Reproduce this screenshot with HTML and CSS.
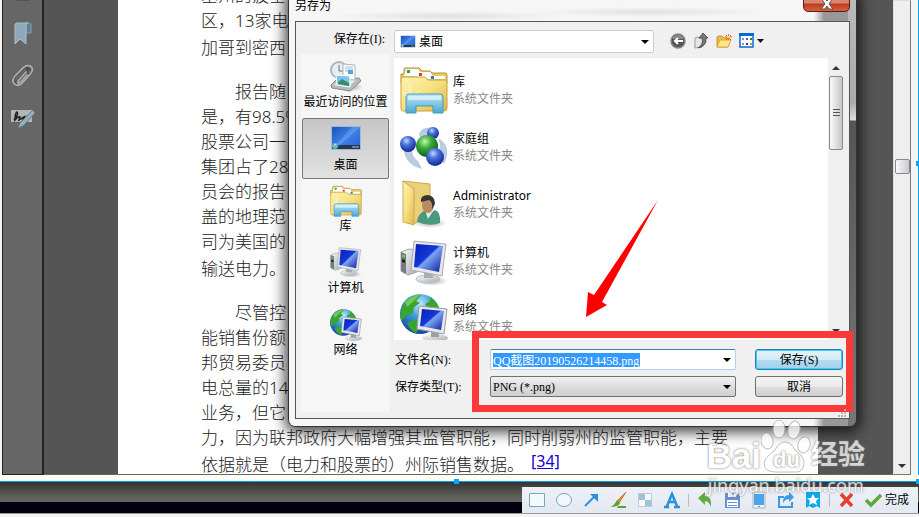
FILE: index.html
```html
<!DOCTYPE html>
<html lang="zh-CN">
<head>
<meta charset="utf-8">
<title>另存为</title>
<link rel="stylesheet" href="styles.css">
</head>
<body>
<svg class="defs" aria-hidden="true">
  <defs>
    <linearGradient id="gFolder" x1="0" y1="0" x2="1" y2="1"><stop offset="0" stop-color="#fff3b0"/><stop offset=".5" stop-color="#f6e080"/><stop offset="1" stop-color="#e0b548"/></linearGradient>
    <linearGradient id="gScreen" x1="0" y1="0" x2="1" y2="1"><stop offset="0" stop-color="#0a1fb8"/><stop offset=".45" stop-color="#1238d8"/><stop offset=".5" stop-color="#7ea4f4"/><stop offset="1" stop-color="#0818a0"/></linearGradient>
    <linearGradient id="gDesk" x1="0" y1="0" x2="1" y2="1"><stop offset="0" stop-color="#1c50b8"/><stop offset=".5" stop-color="#3c82ea"/><stop offset="1" stop-color="#2460cc"/></linearGradient>
    <linearGradient id="gGlass" x1="0" y1="0" x2="0" y2="1"><stop offset="0" stop-color="#bfe6f4"/><stop offset="1" stop-color="#4aa6d8"/></linearGradient>
    <linearGradient id="gMetal" x1="0" y1="0" x2="1" y2="1"><stop offset="0" stop-color="#fafafa"/><stop offset="1" stop-color="#a8acb0"/></linearGradient>
    <radialGradient id="gBlue" cx=".4" cy=".3" r=".7"><stop offset="0" stop-color="#c4d8ff"/><stop offset=".4" stop-color="#4a70dc"/><stop offset="1" stop-color="#122a98"/></radialGradient>
    <radialGradient id="gGreen" cx=".4" cy=".3" r=".7"><stop offset="0" stop-color="#c4f4b0"/><stop offset=".45" stop-color="#38a838"/><stop offset="1" stop-color="#0c6420"/></radialGradient>
    <radialGradient id="gGlobe" cx=".5" cy=".25" r=".8"><stop offset="0" stop-color="#c0ecff"/><stop offset=".4" stop-color="#3c9cdc"/><stop offset="1" stop-color="#103c98"/></radialGradient>
    <radialGradient id="gShadow"><stop offset="0" stop-color="#777" stop-opacity=".6"/><stop offset="1" stop-color="#777" stop-opacity="0"/></radialGradient>
  </defs>
  <symbol id="library" viewBox="0 0 48 48">
    <path d="M4 8V3q0-1 1-1h14l3 3h8l2 2h13q2 0 2 2v8H1V8z" fill="#e8c968" stroke="#b8923c"/>
    <path d="M6 3h12l2 3h10v4H4z" fill="#fff"/><path d="M18 6h12l3 4h12v3H16z" fill="#fff"/>
    <path d="M7 4h3v3H7z" fill="#2e9c34"/><path d="M19 7h3v3h-3z" fill="#dc3a2c"/><path d="M31 10h3v3h-3z" fill="#2878cc"/>
    <path d="M1 13q0-2 2-2h22l3 3h17q2 0 2 2v26q0 3-3 3H3q-2 0-2-3z" fill="url(#gFolder)" stroke="#c8a040"/>
    <path d="M10 15l2 14 11-7-9 10 7 6-10-3-7 8 3-11-6-6 7 2z" fill="#fff" opacity=".4"/>
    <path d="M6 47V31q0-3 3-3h31q3 0 3 3v16H33v-7H16v7z" fill="url(#gGlass)" stroke="#4899bc"/>
    <path d="M8 31q0-1 2-1h29q2 0 2 1v3H8z" fill="#e4f8ff" opacity=".7"/>
  </symbol>
  <symbol id="homegroup" viewBox="0 0 48 48">
    <path d="M19 8Q22 0 34 2L30 9 38 13Q28 8 21 13zM4 25Q6 39 22 43L18 35Q12 31 12 24zM40 13Q52 22 44 38L36 29Q43 20 38 14z" fill="#a9bddc" opacity=".8"/>
    <circle cx="33" cy="7" r="6" fill="url(#gBlue)"/><circle cx="8" cy="18" r="8" fill="url(#gBlue)"/><circle cx="27" cy="20" r="11" fill="url(#gGreen)"/><circle cx="35" cy="31" r="9" fill="url(#gBlue)"/>
  </symbol>
  <symbol id="user" viewBox="0 0 48 48">
    <ellipse cx="30" cy="43" rx="17" ry="5" fill="url(#gShadow)"/>
    <path d="M3 1l27 3v31l-16 9z" fill="#ead078" stroke="#cda954"/><path d="M3 1l11 8v36L3 42z" fill="url(#gFolder)" stroke="#cda954"/>
    <path d="M17 42q1-10 10-12l4 3 4-3q6 2 5 13-10 4-23-1z" fill="#4b9a80"/><path d="M25 30l3 9 5-8z" fill="#e0f0ea"/>
    <ellipse cx="28" cy="25" rx="6" ry="8" fill="#b88a64"/><path d="M21 22q-1-7 7-7 7 1 7 9l-3 5q1-7-3-9z" fill="#383430"/>
  </symbol>
  <symbol id="computer" viewBox="0 0 48 48">
    <ellipse cx="32" cy="41" rx="16" ry="5" fill="url(#gShadow)"/>
    <path d="M1 12l8-3 8 1v22l-9 3-7-4z" fill="url(#gMetal)" stroke="#a4a8ac"/><path d="M1 12l5 2v20l-5-3z" fill="#777c80"/><path d="M2 15h3v2H2z" fill="#54d830"/><path d="M2 19l3 1v3l-3-1z" fill="#222"/>
    <ellipse cx="28" cy="39" rx="12" ry="4" fill="url(#gMetal)" stroke="#b8bcc0"/><path d="M24 30l9 1v7h-9z" fill="#a8adb2"/>
    <path d="M14 1l32 3-4 32-31-6z" fill="#e4e6e9" stroke="#a9adb2"/><path d="M16 4l27 2-4 26-25-5z" fill="url(#gScreen)"/>
  </symbol>
  <symbol id="network" viewBox="0 0 48 48">
    <circle cx="20" cy="20" r="20" fill="url(#gGlobe)"/>
    <path d="M5 8q8-8 16-7l-5 6 4 2-6 4-1 6-7 3-5 5Q-1 17 5 8zM30 3q9 6 10 15l-8-4-4 2-3-6 5-3zM7 29l9-4 5 6-5 8Q9 36 7 29z" fill="#39a52e"/>
    <path d="M5 8q8-7 15-7l-7 7-6 5z" fill="#9be070" opacity=".6"/>
    <ellipse cx="35" cy="44" rx="13" ry="4" fill="url(#gMetal)"/><path d="M31 36h8v7h-8z" fill="#9aa0a6"/>
    <path d="M19 12l28 3-3 25-27-5z" fill="#e6e8eb" stroke="#9a9ea4"/><path d="M22 15l22 2-3 19-21-4z" fill="url(#gScreen)"/>
  </symbol>
  <symbol id="desktop" viewBox="0 0 32 24">
    <path d="M1 0h30v24H1z" fill="#a4b8d4"/><path d="M2 1h28v22H2z" fill="url(#gDesk)"/><path d="M2 19h28v4H2z" fill="#26364c"/><path d="M2 23L22 1h8L10 19z" fill="#fff" opacity=".15"/>
    <circle cx="5" cy="20" r="3" fill="#50b8e0"/><path d="M4 18h2v2H4z" fill="#f4c430"/><path d="M22 20h7v2h-7z" fill="#6c8098"/>
  </symbol>
  <symbol id="recent" viewBox="0 0 32 32">
    <ellipse cx="20" cy="26" rx="13" ry="5" fill="url(#gShadow)"/>
    <circle cx="9" cy="9" r="8" fill="#e4edf2" stroke="#a9b7c0" stroke-width="2"/><path d="M9 4v6h4" fill="none" stroke="#60727e"/>
    <path d="M1 24l6-6 22-1 2 3-11 10-18-3z" fill="#b8babc" stroke="#88898b"/><path d="M4 24l4-4 18-1-8 7z" fill="#eee"/>
    <path d="M13 3l12 1v15l-12-1z" fill="#fff" stroke="#b0b4b8"/><path d="M15 6h8M15 8h8M15 10h5" stroke="#abc"/><path d="M18 9h5v4h-5z" fill="#55a3dc"/>
    <path d="M6 14l14 1v11L7 24z" fill="#7fc4ec" stroke="#fff"/><path d="M8 21l4-3 7 4v3L8 23z" fill="#3b8c6c"/>
  </symbol>
</svg>

<main class="viewer">
  <nav class="rail" aria-label="导航窗格">
    <button class="rail-btn rail-pages" aria-label="页面"><svg width="16" height="22" viewBox="0 0 16 22"><path d="M1 0h14v21H1z" fill="#c4c6c6" stroke="#444"/></svg></button>
    <button class="rail-btn" aria-label="书签"><svg width="18" height="23" viewBox="0 0 18 23"><path d="M11 1h5q1 0 1 2v8h-5z" fill="#5c7f92" stroke="#84a0b0"/><path d="M1 22V3q0-2 2-2h11q-2 1-2 4v17l-6-5z" fill="#8ea9b9" stroke="#a8bfcc"/></svg></button>
    <button class="rail-btn" aria-label="附件"><svg width="22" height="24" viewBox="0 0 24 24"><path d="M7 17L17 6q2-2 0-3-2-2-5 0L3 12q-4 6 0 9 4 3 8-1l9-10q3-4 1-6M5 17q-1 3 2 3l3-2 8-9" fill="none" stroke="#4c4c4c" stroke-width="3"/><path d="M7 17L16 7M12 3L3 12q-4 6 0 9 4 3 8-1l9-10q4-5 1-8-4-3-9 1M7 17q-2 2 0 3l3-2 7-8" fill="none" stroke="#aaa" stroke-width="2"/></svg></button>
    <button class="rail-btn" aria-label="签名"><svg width="24" height="20" viewBox="0 0 24 20"><path d="M0 1h21v12H0z" fill="#b4b6b6"/><path d="M3 11q5-6 3-8-2 1-2 8 3-4 5-3l-1 3 5-3-1 3 4-4" fill="none" stroke="#222" stroke-width="1.5"/><path d="M22 1L9 14l-2 5 5-2L24 4z" fill="#94afc0" stroke="#5e7b8d"/></svg></button>
  </nav>
  <div class="canvas">
    <article class="page">
      <p><span>塞州的波士</span><span>区，13家电</span><span class="last">加哥到密西</span></p>
      <p><span class="first">报告随</span><span>是，有98.5%</span><span>股票公司一</span><span>集团占了28</span><span>员会的报告</span><span>盖的地理范</span><span>司为美国的</span><span class="last">输送电力。</span></p>
      <p><span class="first">尽管控</span><span>能销售份额</span><span>邦贸易委员</span><span>电总量的14</span><span>业务，但它</span><span>力，因为联邦政府大幅增强其监管职能，同时削弱州的监管职能，主要</span><span class="last">依据就是（电力和股票的）州际销售数据。<a href="#ref34">[34]</a></span></p>
    </article>
  </div>
  <div class="doc-scroll"><i class="doc-thumb"></i><i class="arrow-down"></i></div>
</main>
<div class="frame-edge"></div>

<footer class="desktop-strip">
  <div class="shot-tools" role="toolbar" aria-label="截图工具">
    <button aria-label="矩形"><svg viewBox="0 0 18 18"><path d="M1.500 2.500h15v13h-15z" fill="#f2f8fc" stroke="#7ba3bd"/></svg></button>
    <button aria-label="椭圆"><svg viewBox="0 0 18 18"><ellipse cx="9" cy="9" rx="7.500" ry="6.500" fill="#f2f8fc" stroke="#7ba3bd"/></svg></button>
    <button aria-label="箭头"><svg viewBox="0 0 18 18"><path d="M3 15L13 5" stroke="#2b8fdb" stroke-width="2"/><path d="M8 3h8v8z" fill="#2b8fdb"/></svg></button>
    <button aria-label="画刷"><svg viewBox="0 0 18 18"><path d="M17 1L8 10l2 2z" fill="#e28a34" stroke="#d07a2c"/><path d="M8 9l3 3q-1 4-10 4 4-1 7-7z" fill="#5da432"/><path d="M9 15h8v2H8z" fill="#5da432"/></svg></button>
    <button aria-label="马赛克"><svg viewBox="0 0 18 18"><path d="M2 2h14v14H2z" fill="#f6f9fc"/><path d="M2 2h7v7H2zM9 9h7v7H9z" fill="#a3bfd8"/><path d="M2.500 2.500h13v13h-13z" fill="none" stroke="#b7cbdd"/></svg></button>
    <button aria-label="文字"><svg viewBox="0 0 18 18"><path d="M1 16h5M11 16h6M4 15L9 3l5 12M6 11h6" fill="none" stroke="#2b8fdb" stroke-width="2.500"/></svg></button>
    <i class="sep"></i>
    <button aria-label="撤销"><svg viewBox="0 0 18 18"><path d="M2 7l7-6v4q7 0 6 11-2-6-6-6v4z" fill="#63aa3c"/></svg></button>
    <button aria-label="保存"><svg viewBox="0 0 18 18"><path d="M2 2h13l2 3v12H2z" fill="#6b8ed8"/><path d="M5 2h8v4H5zM4 9h11v7H4z" fill="#fff"/><path d="M9 2h2v3H9zM5 11h9v1H5zM5 14h9v1H5z" fill="#6b8ed8"/></svg></button>
    <button aria-label="发送到手机"><svg viewBox="0 0 18 18"><path d="M3 1h12v16H3z" fill="#eef3f7" stroke="#a9b4be"/><path d="M4 3h10v11H4z" fill="#49a4ea"/><path d="M8 15h2v1H8z" fill="#7d8994"/></svg></button>
    <button aria-label="分享"><svg viewBox="0 0 18 18"><path d="M7 6H2v10h13v-5" fill="none" stroke="#3e9ae0" stroke-width="2"/><path d="M6 12q0-8 6-8V1l5 5-5 5V8q-4 0-6 4z" fill="#3e9ae0"/></svg></button>
    <button aria-label="收藏"><svg viewBox="0 0 18 18"><path d="M2 1h14v16l-3-2-4 2-4-2-3 2z" fill="#08a9ee"/><path d="M9 3l2 4h4l-3 3 1 4-4-2-4 2 1-4-3-3h4z" fill="#fff"/></svg></button>
    <i class="sep"></i>
    <button aria-label="退出"><svg viewBox="0 0 18 18"><path d="M4 3l11 12M15 3L4 15" stroke="#e5402e" stroke-width="3.500"/></svg></button>
    <button class="done"><svg viewBox="0 0 18 18"><path d="M2 9l5 5L17 4" fill="none" stroke="#5da83a" stroke-width="3.500"/></svg>完成</button>
  </div>
</footer>
<div class="base"></div>

<section class="dialog" role="dialog" aria-labelledby="dlg-title">
  <header class="titlebar"><span id="dlg-title">另存为</span><button class="close" aria-label="关闭"><svg width="14" height="12" viewBox="0 0 14 12"><path d="M1 0h4l2 3 2-3h4L9 6l4 5H9L7 8l-2 3H1l4-5z" fill="#fff" stroke="#555"/></svg></button></header>
  <div class="client">
    <div class="lookin">
      <label for="lookin">保存在(I):</label>
      <div class="combo look-combo"><svg width="16" height="13"><use href="#desktop"/></svg><select id="lookin"><option>桌面</option></select></div>
      <div class="nav-tools">
        <button aria-label="后退"><svg width="16" height="16" viewBox="0 0 16 16"><circle cx="8" cy="8" r="7" fill="#555" stroke="#888" stroke-width="1.500"/><path d="M3 4q5-4 10 0v2H3z" fill="#aaa" opacity=".6"/><path d="M13 8H5M8 5L5 8l3 3" fill="none" stroke="#fff" stroke-width="2"/></svg></button>
        <button aria-label="向上一级"><svg width="16" height="16" viewBox="0 0 16 16"><path d="M2 5l3-1 1 1h5l-2 9-7 1z" fill="#e6e6e6" stroke="#999"/><path d="M5 15Q11 11 9 5H6l4-5 5 5h-2q1 8-8 10z" fill="#777" stroke="#444" stroke-width=".8"/></svg></button>
        <button aria-label="新建文件夹"><svg width="16" height="16" viewBox="0 0 16 16"><path d="M1 14V4l1-1h4l2 2h4v9z" fill="#e9bd4a" stroke="#c7952e"/><path d="M1 14L4 7h11l-3 7z" fill="#ffe58e" stroke="#d9a93c"/><path d="M12.500 1v6M9 4h7M10 2l5 5M15 2l-5 5" stroke="#f2562a"/><circle cx="12.500" cy="4" r="1.500" fill="#ffdc54"/></svg></button>
        <button class="views" aria-label="视图"><svg width="25" height="16" viewBox="0 0 25 16"><path d="M1 1h13v13H1z" fill="#fff" stroke="#0b6ad8" stroke-width="1.500"/><path d="M0 0h15v3H0z" fill="#0b6ad8"/><path d="M3 5h2v2H3z" fill="#8a8ad0"/><path d="M7 5h2v2H7z" fill="#5a50c8"/><path d="M11 5h2v2h-2z" fill="#1b9040"/><path d="M3 10h2v2H3z" fill="#f07850"/><path d="M7 10h2v2H7z" fill="#1838b0"/><path d="M11 10h2v2h-2z" fill="#c89c20"/><path d="M18 6h7l-3.500 4z" fill="#111"/></svg></button>
      </div>
    </div>
    <div class="body">
      <nav class="places">
        <button><svg width="32" height="32"><use href="#recent"/></svg>最近访问的位置</button>
        <button class="active"><svg width="32" height="32"><use href="#desktop" y="2" height="24"/></svg>桌面</button>
        <button><svg width="32" height="32"><use href="#library"/></svg>库</button>
        <button><svg width="32" height="32"><use href="#computer"/></svg>计算机</button>
        <button><svg width="32" height="32"><use href="#network"/></svg>网络</button>
      </nav>
      <div class="pane">
        <div class="list-wrap">
          <ul class="files">
            <li><svg width="48" height="48"><use href="#library"/></svg><div>库<small>系统文件夹</small></div></li>
            <li><svg width="48" height="48"><use href="#homegroup" y="3"/></svg><div>家庭组<small>系统文件夹</small></div></li>
            <li><svg width="48" height="48"><use href="#user"/></svg><div>Administrator<small>系统文件夹</small></div></li>
            <li><svg width="48" height="48"><use href="#computer" y="3"/></svg><div>计算机<small>系统文件夹</small></div></li>
            <li><svg width="48" height="48"><use href="#network"/></svg><div>网络<small>系统文件夹</small></div></li>
          </ul>
          <div class="list-scroll"><i class="arrow-up"></i><i class="list-thumb"></i><i class="arrow-down"></i></div>
        </div>
        <form class="save-form">
          <label for="fname">文件名(N):</label>
          <div class="combo name-combo"><input id="fname" value="QQ截图20190526214458.png"></div>
          <button type="button" class="btn primary">保存(S)</button>
          <label for="ftype">保存类型(T):</label>
          <div class="combo type-combo"><select id="ftype"><option>PNG (*.png)</option></select></div>
          <button type="button" class="btn">取消</button>
          <div class="callout"></div>
          <svg class="pointer" width="73" height="120" viewBox="0 0 73 120"><path d="M72 1L16 103l5 3L0 118l2-25 6 3z" fill="#f00"/></svg>
        </form>
      </div>
    </div>
    <svg class="grip" width="9" height="9" viewBox="0 0 9 9"><path d="M7 1h2v2H7zM4 4h2v2H4zM7 4h2v2H7zM1 7h2v2H1zM4 7h2v2H4zM7 7h2v2H7z" fill="#b4b4b4"/></svg>
  </div>
</section>

<i class="handle handle-bottom"></i><i class="handle handle-right"></i><i class="handle handle-corner"></i>
<div class="watermark">
  <div class="brand"><span>Bai</span><span class="paw"><svg width="50" height="54" viewBox="0 0 50 54"><g fill="#fff" stroke="#aaa"><ellipse cx="6" cy="21" rx="6" ry="8" transform="rotate(-12 6 21)"/><ellipse cx="18" cy="9" rx="6" ry="9"/><ellipse cx="33" cy="10" rx="6" ry="9" transform="rotate(12 33 10)"/><ellipse cx="43" cy="25" rx="6" ry="8" transform="rotate(15 43 25)"/><path d="M24 22q6 0 10 8 10 7 9 14-1 9-10 8H14q-10 0-11-8 0-6 11-14 4-8 10-8z"/></g></svg><em>du</em></span><span class="cn">经验</span></div>
  <div class="url">jingyan.baidu.com</div>
</div>
</body>
</html>
```
FILE: styles.css
```css
* { box-sizing: border-box; }
body {
  margin: 0;
  position: relative;
  height: 100vh;
  display: flex;
  flex-direction: column;
  overflow: hidden;
  background: #00000f;
  color: #000;
  font: 12px/18px "Noto Sans", "Noto Sans CJK SC", sans-serif;
}
button { padding: 0; border: 0; background: none; font: inherit; color: inherit; }
svg { display: block; flex: none; }
.defs { position: absolute; width: 0; height: 0; }

/* document viewer */
.viewer { flex: 1; min-height: 0; display: flex; border: solid #f4f4f4; border-width: 0 7px 0 2px; overflow: hidden; }
.rail {
  width: 42px;
  display: flex;
  flex-direction: column;
  align-items: center;
  gap: 19px;
  background: #666;
  border: solid #222;
  border-width: 0 2px 1px 1px;
}
.rail-btn { height: 24px; display: grid; place-items: center; }
.rail-pages { margin-top: -22px; }
.canvas { flex: 1; min-width: 0; background: #555; padding: 0 75px 0 74px; border-bottom: 1px solid #666; }
.page {
  height: 100%;
  overflow: hidden;
  background: #fff;
  padding-left: 83px;
  color: #222;
  font-size: 17px;
  font-weight: 300;
  line-height: 25px;
  white-space: nowrap;
}
.page p { margin: 0 0 16px; }
.page p:first-child { margin-top: -17px; }
.page span { display: block; }
.page .first { padding-left: 34px; }
.page .last { line-height: 30px; }
.page a { color: #1400d8; font-size: 16px; font-weight: 400; margin-left: 7px; position: relative; top: -4px; }
.doc-scroll {
  width: 18px;
  background: #efefef;
  border: 1px solid #ddd;
  border-right-color: #777;
  border-bottom-color: #777;
  display: flex;
  flex-direction: column;
  align-items: center;
  justify-content: space-between;
  padding: 158px 0 6px;
}
.doc-thumb { width: 15px; height: 15px; border: 1px solid #888; border-radius: 2px; background: linear-gradient(90deg, #fafafa, #c8c8d0); }
.arrow-down { border: solid transparent; border-width: 4px 4px 0; border-top-color: #333; }
.arrow-up { border: solid transparent; border-width: 0 4px 4px; border-bottom-color: #333; }
.frame-edge { height: 7px; background: #fcfdf4; border-bottom: 1px solid #00a2f0; }
.viewer { border-right: 0; }
.viewer::after { content: ""; width: 7px; background: #f4f4f4; border-right: 1px solid #00a2f0; }

/* desktop and screenshot toolbar */
.desktop-strip {
  height: 31px;
  display: flex;
  justify-content: flex-end;
  align-items: flex-end;
  padding-right: 1px;
  background: linear-gradient(#333, #5d5e58 14px, #64655f 20px, #00000f 20px);
}
.shot-tools {
  height: 26px;
  display: flex;
  align-items: center;
  gap: 9px;
  padding: 0 9px 0 6px;
  background: linear-gradient(#edf1f6, #e3e9f2);
  white-space: nowrap;
}
.shot-tools svg { width: 18px; height: 18px; }
.sep { width: 1px; height: 13px; margin: 0 -2px; background: #b9bec6; }
.done { display: flex; align-items: center; gap: 3px; }
.base { height: 4px; background: #f4f4f4; border-top: 1px solid #999; }

/* save dialog */
.dialog {
  position: absolute;
  top: -8px;
  left: 288px;
  right: 62px;
  padding: 0 6px 7px;
  border: solid #333;
  border-width: 0 1px 1px;
  border-radius: 0 0 7px 7px;
  background:
    radial-gradient(ellipse 120px 5px at 160px 24px, #e0e0e0, transparent),
    radial-gradient(ellipse 120px 5px at 360px 20px, #e0e0e0, transparent),
    linear-gradient(#bbb, #aaa 110px, #ddd 128px, #555 129px, #777) right / 8px 100% no-repeat,
    linear-gradient(90deg, #f6f6f6 525px, #999 535px);
  box-shadow: 0 2px 14px 3px rgba(0, 0, 0, .75);
}
.titlebar { height: 29px; display: flex; justify-content: space-between; align-items: flex-start; line-height: 28px; }
.close {
  width: 47px;
  height: 20px;
  display: grid;
  place-items: center;
  padding-top: 3px;
  border: 1px solid #5a1c14;
  border-radius: 0 0 5px 5px;
  background: linear-gradient(#d88470 10px, #bc3a20 11px, #d8603c);
}
.client { position: relative; background: #f0f0f0; border: 1px solid #555; padding: 0 5px 6px; }
.lookin { display: flex; align-items: flex-start; padding-top: 8px; height: 32px; }
.lookin label { width: 93px; padding-right: 9px; text-align: right; }
.lookin label, .save-form, .save-form select, .save-form input { font-family: "Liberation Serif", "Noto Sans CJK SC", serif; }
.combo { position: relative; display: flex; align-items: center; background: #fff; border: 1px solid #c4ccd8; border-radius: 2px; }
.combo::after { content: ""; position: absolute; right: 4px; border: solid transparent; border-width: 4px 4px 0; border-top-color: #000; pointer-events: none; }
.combo select { appearance: none; flex: 1; height: 100%; padding: 0 16px 0 3px; border: 0; background: none; font-size: 12px; color: #000; }
.look-combo { flex: 1; height: 23px; padding-left: 5px; }
.look-combo select { font-family: inherit; }
.nav-tools { width: 190px; display: flex; gap: 7px; padding: 3px 0 0 16px; }
.body { display: flex; gap: 4px; }
.places { width: 89px; padding: 2px 1px; background: #f6f6f6; display: flex; flex-direction: column; gap: 1px; }
.places button { height: 61px; display: flex; flex-direction: column; align-items: center; padding-top: 5px; white-space: nowrap; }
.places .active { border: 1px solid #777; border-radius: 2px; background: linear-gradient(#c6c6c6, #e2e2e2); }
.pane { flex: 1; min-width: 0; padding-top: 4px; }
.list-wrap { display: flex; height: 282px; background: #fff; overflow: hidden; }
.files { flex: 1; margin: 0; padding: 3px 0 0 6px; list-style: none; }
.files li { height: 57px; display: flex; align-items: center; gap: 5px; line-height: 17px; }
.files small { display: block; font-size: 12px; color: #888; }
.list-scroll { width: 16px; display: flex; flex-direction: column; align-items: center; padding: 8px 0 7px; background: #efefef; gap: 6px; }
.list-thumb {
  width: 14px;
  height: 74px;
  border: 1px solid #888;
  border-radius: 2px;
  background:
    repeating-linear-gradient(#555 0 1px, transparent 1px 3px) center / 7px 8px no-repeat,
    linear-gradient(90deg, #fafafa, #c6c6cc);
}
.list-scroll .arrow-down { margin-top: auto; }
.save-form { position: relative; display: grid; grid-template-columns: 96px 1fr 88px; row-gap: 6px; align-items: center; padding: 9px 1px 15px 0; }
.save-form label { padding-left: 1px; }
.save-form .combo { height: 21px; margin-right: 19px; }
.name-combo { border-color: #3c7fb1 #b5cfe7 #b5cfe7; padding-left: 2px; }
.name-combo input { width: 147px; height: 14px; padding: 0; border: 0; background: #39f; color: #fff; font-size: 12px; }
.save-form .type-combo { border-color: #707070; background: linear-gradient(#f2f2f2, #ddd 50%, #cfcfcf); }
.type-combo select { padding-left: 2px; font-size: 12px; }
.btn { height: 21px; border: 1px solid #707070; border-radius: 3px; background: linear-gradient(#f3f3f3, #ebebeb 50%, #ddd 51%, #cfcfcf); }
.primary { border-color: #2c7fae; background: linear-gradient(#e6f3fa, #d4ebf6 50%, #b4dcf0 51%, #a0d2ee); box-shadow: inset 0 0 0 1px #3cc8f4; }
.callout { position: absolute; left: 78px; right: -9px; top: -9px; border: 7px solid #fc3939; height: 81px; }
.pointer { position: absolute; left: 192px; top: -141px; }
.grip { position: absolute; right: 3px; bottom: 1px; }

/* selection handles */
.handle { position: absolute; width: 5px; height: 5px; background: #00a8f8; }
.handle-bottom { left: 454px; bottom: 33px; }
.handle-right { right: 0; top: 161px; width: 3px; }
.handle-corner { right: 0; bottom: 33px; width: 3px; }

/* watermark */
.watermark { position: absolute; right: 54px; bottom: 21px; color: #fff; opacity: .75; text-shadow: 0 0 1px #777, 0 0 3px #777; font-weight: 700; }
.brand { display: flex; align-items: flex-end; font-family: "Liberation Sans", "Noto Sans CJK SC", sans-serif; font-size: 35px; line-height: 36px; }
.paw { position: relative; }
.paw em { position: absolute; left: 12px; bottom: 2px; font-size: 22px; line-height: 24px; font-style: normal; }
.brand .cn { font-size: 27px; line-height: 38px; }
.url { font-size: 18px; line-height: 22px; font-weight: 400; text-align: center; }
```
